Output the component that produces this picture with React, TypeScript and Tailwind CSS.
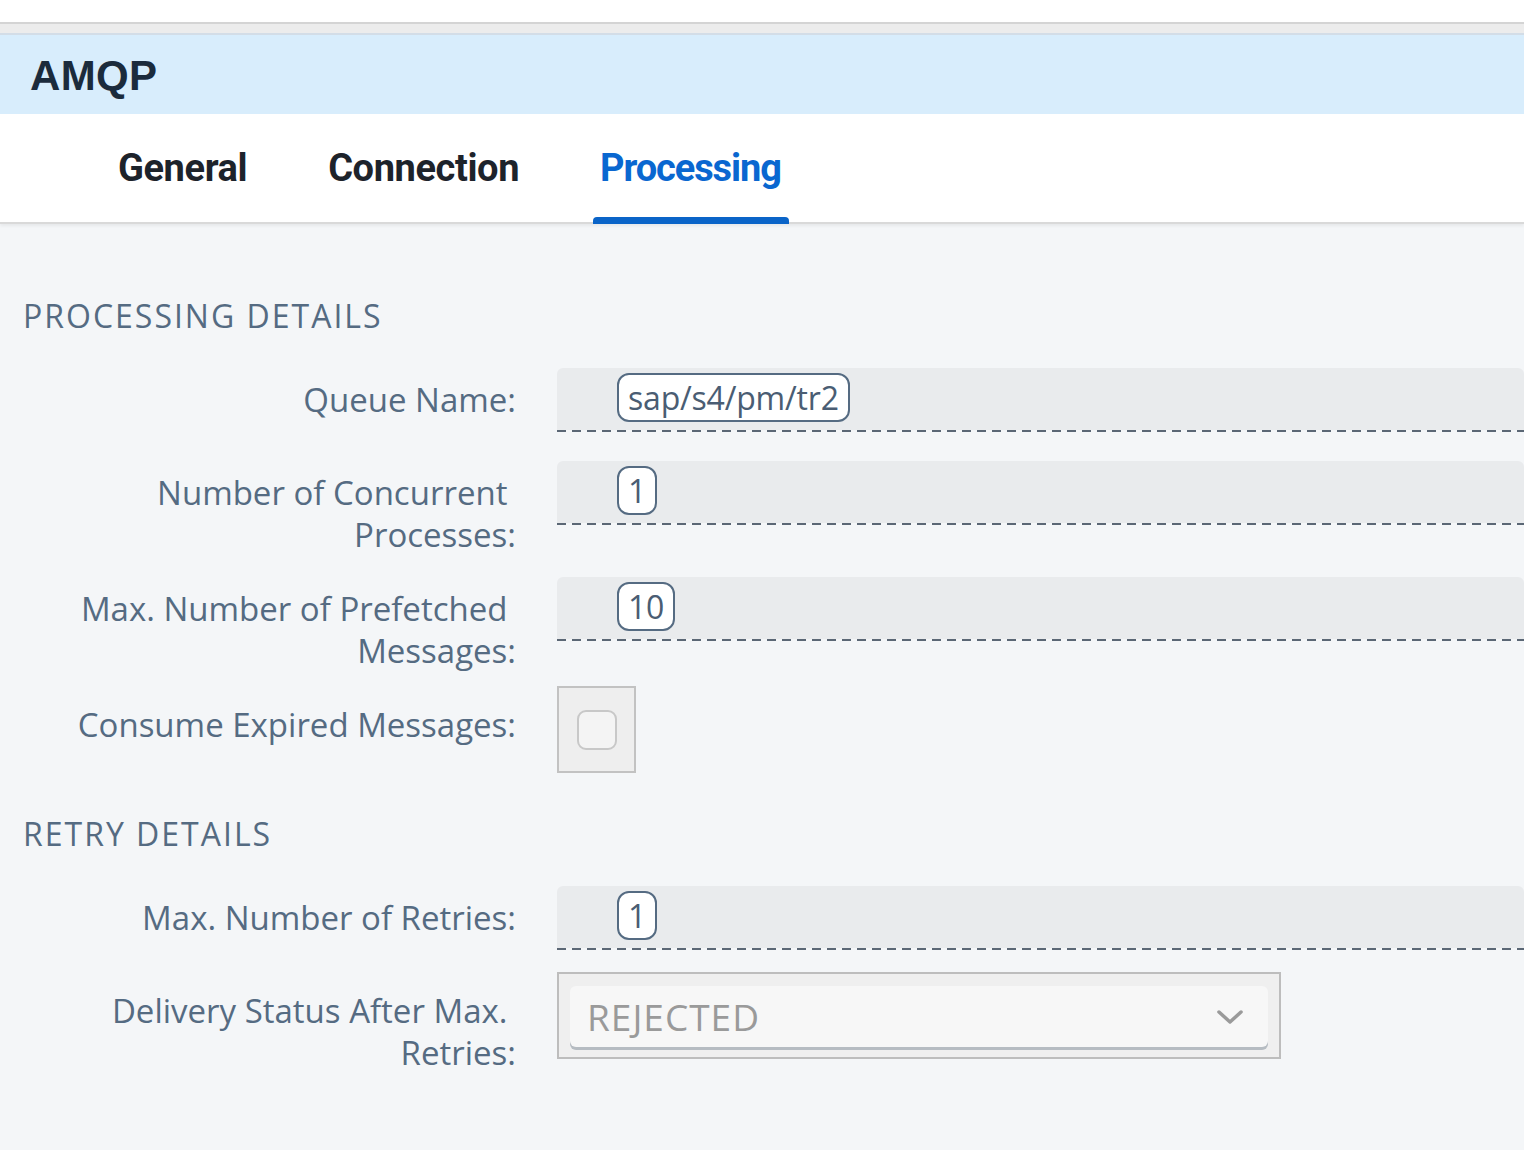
import React from 'react';

const labelFont = { fontFamily: '"Open Sans", "Noto Sans", sans-serif' };

function Field({ value }: { value: string }) {
  return (
    <div className="flex-1">
      <div className="h-[62px] bg-[#e9ebed] rounded-t-[6px] pl-[60px] pt-[5px]">
        <span className="inline-flex h-[49px] items-center px-[9px] border-2 border-[#556b82] rounded-[12px] bg-white text-[32px] tracking-[-0.2px] text-[#4a5d73]">
          {value}
        </span>
      </div>
      <div className="h-[2px] bg-[repeating-linear-gradient(to_right,#5b6775_0_9px,transparent_9px_15px)]" />
    </div>
  );
}

function Label({ children }: { children: React.ReactNode }) {
  return (
    <div className="w-[516px] shrink-0 text-right text-[33px] leading-[42px] text-[#556b82] pt-[11px]">
      {children}
    </div>
  );
}

export default function App() {
  return (
    <div className="w-[1524px] h-[1150px] overflow-hidden bg-[#f4f6f8]" style={labelFont}>
      <div className="h-[22px] bg-white" />
      <div className="h-[2px] bg-[#d4d4d4]" />
      <div className="h-[9px] bg-[#ececec]" />
      <div className="h-[2px] bg-[#d3dde7]" />
      <div className="h-[79px] bg-[#d8edfc] flex items-center pl-[30px]">
        <h1
          className="text-[42px] font-black text-[#1b2b3c] tracking-[0.3px] mt-[2px]"
          style={{ fontFamily: '"Liberation Sans", Arial, sans-serif' }}
        >
          AMQP
        </h1>
      </div>

      <div className="h-[110px] bg-white border-b-2 border-[#d9d9d9] flex items-end pl-[118px] gap-[81px] shadow-[0_2px_3px_rgba(0,0,0,0.06)]">
        {['General', 'Connection', 'Processing'].map((t) => (
          <div key={t} className="relative flex flex-col items-center">
            <span
              className={`text-[38px] font-bold leading-none mb-[35px] ${
                t === 'Processing' ? 'text-[#0a67d0] tracking-[-1.1px]' : 'text-[#1d232b] tracking-[-0.4px]'
              }`}
              style={{ fontFamily: '"Roboto", sans-serif' }}
            >
              {t}
            </span>
            {t === 'Processing' && (
              <div className="absolute bottom-[-2px] left-[-7px] right-[-8px] h-[7px] bg-[#0a64c8] rounded-t-[4px]" />
            )}
          </div>
        ))}
      </div>

      <div className="pl-[23px]">
        <h2 className="mt-[72px] text-[32px] leading-[40px] tracking-[2px] text-[#556b82]">PROCESSING DETAILS</h2>
      </div>

      <div className="flex flex-col">
        <div className="flex items-start gap-[41px] mt-[32px]">
          <Label>Queue Name:</Label>
          <Field value="sap/s4/pm/tr2" />
        </div>

        <div className="flex items-start gap-[41px] mt-[29px]">
          <Label>
            Number of Concurrent&nbsp;
            <br />
            Processes:
          </Label>
          <Field value="1" />
        </div>

        <div className="flex items-start gap-[41px] mt-[21px]">
          <Label>
            Max. Number of Prefetched&nbsp;
            <br />
            Messages:
          </Label>
          <Field value="10" />
        </div>

        <div className="flex items-start gap-[41px] mt-[14px]">
          <div className="w-[516px] shrink-0 text-right text-[33px] leading-[42px] text-[#556b82] pt-[18px]">
            Consume Expired Messages:
          </div>
          <div className="w-[79px] h-[87px] border-2 border-[#c2c2c2] bg-[#eeeeee] flex items-center justify-center">
            <div className="w-[40px] h-[40px] rounded-[9px] border-2 border-[#c8c8c8] bg-[#f4f4f4]" />
          </div>
        </div>
      </div>

      <div className="pl-[23px]">
        <h2 className="mt-[41px] text-[32px] leading-[40px] tracking-[2px] text-[#556b82]">RETRY DETAILS</h2>
      </div>

      <div className="flex flex-col">
        <div className="flex items-start gap-[41px] mt-[32px]">
          <Label>Max. Number of Retries:</Label>
          <Field value="1" />
        </div>

        <div className="flex items-start gap-[41px] mt-[22px]">
          <div className="w-[516px] shrink-0 text-right text-[33px] leading-[42px] text-[#556b82] pt-[18px]">
            Delivery Status After Max.&nbsp;
            <br />
            Retries:
          </div>
          <div className="w-[724px] h-[87px] border-2 border-[#bdbdbd] bg-[#efefef] px-[11px] pt-[12px]">
            <div className="h-[61px] bg-[#f7f7f7] rounded-[6px] shadow-[0_3px_0_#b6bcc2] flex items-center justify-between pl-[17px] pr-[24px]">
              <span className="text-[37px] text-[#9a9a9a] tracking-[1px]">REJECTED</span>
              <svg width="28" height="16" viewBox="0 0 28 16" fill="none">
                <path d="M3 3 L14 13 L25 3" stroke="#9a9a9a" strokeWidth="3.5" strokeLinecap="round" strokeLinejoin="round" />
              </svg>
            </div>
          </div>
        </div>
      </div>
    </div>
  );
}
